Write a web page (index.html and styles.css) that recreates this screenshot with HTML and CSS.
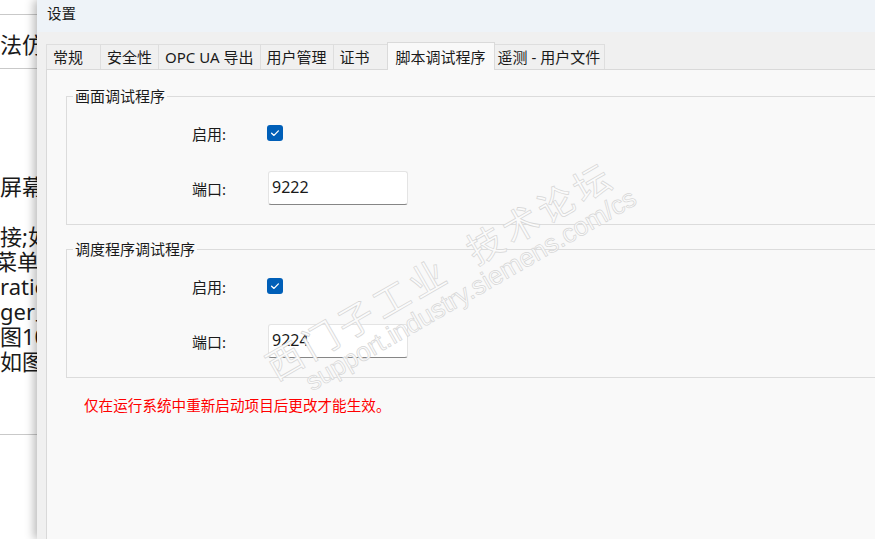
FILE: index.html
```html
<!DOCTYPE html>
<html lang="zh-CN">
<head>
    <meta charset="UTF-8">
    <meta name="viewport" content="width=device-width, initial-scale=1.0">
    <title>设置</title>
    <link rel="stylesheet" href="styles.css">
</head>
<body>
    <div class="screen">
        <div class="doc">
            <div class="doc-rule first"></div>
            <div class="doc-line head">法仿真</div>
            <div class="doc-rule second"></div>
            <div class="doc-text">
                <div class="doc-line">屏幕</div>
                <div class="doc-line">&nbsp;</div>
                <div class="doc-line">接;如</div>
                <div class="doc-line cut">菜单</div>
                <div class="doc-line">ration</div>
                <div class="doc-line">ger显示</div>
                <div class="doc-line">图10</div>
                <div class="doc-line">如图</div>
            </div>
            <div class="doc-rule last"></div>
        </div>

        <div class="dialog">
            <div class="titlebar">设置</div>
            <div class="dialog-body">
                <div class="tabs">
                    <div class="tab">常规</div>
                    <div class="tab">安全性</div>
                    <div class="tab">OPC UA 导出</div>
                    <div class="tab">用户管理</div>
                    <div class="tab">证书</div>
                    <div class="tab active">脚本调试程序</div>
                    <div class="tab last">遥测 - 用户文件</div>
                </div>
                <div class="pane">
                    <fieldset class="group">
                        <legend>画面调试程序</legend>
                        <div class="form-row check-row">
                            <label>启用:</label>
                            <span class="check">
                                <svg width="16" height="16" viewBox="0 0 16 16"><path d="M4.6 8.2 L7 10.4 L11.4 5.9" fill="none" stroke="#fff" stroke-width="1.3" stroke-linecap="round" stroke-linejoin="round"/></svg>
                            </span>
                        </div>
                        <div class="form-row port-row">
                            <label>端口:</label>
                            <input class="port" type="text" value="9222">
                        </div>
                    </fieldset>

                    <fieldset class="group">
                        <legend>调度程序调试程序</legend>
                        <div class="form-row check-row">
                            <label>启用:</label>
                            <span class="check">
                                <svg width="16" height="16" viewBox="0 0 16 16"><path d="M4.6 8.2 L7 10.4 L11.4 5.9" fill="none" stroke="#fff" stroke-width="1.3" stroke-linecap="round" stroke-linejoin="round"/></svg>
                            </span>
                        </div>
                        <div class="form-row port-row">
                            <label>端口:</label>
                            <input class="port" type="text" value="9224">
                        </div>
                    </fieldset>

                    <p class="notice">仅在运行系统中重新启动项目后更改才能生效。</p>
                </div>
            </div>
        </div>

        <!-- forum watermark baked into the screenshot -->
        <div class="watermark">
            <div class="wm-cn">西门子工业&nbsp;&nbsp;技术论坛</div>
            <div class="wm-url">support.industry.siemens.com/cs</div>
        </div>
    </div>
</body>
</html>
```

FILE: styles.css
```css
* {
    box-sizing: border-box;
}

body {
    margin: 0;
    overflow: hidden;
    font-family: "Noto Sans", "Noto Sans CJK SC", sans-serif;
    color: #1a1a1a;
}

.screen {
    position: relative;
    display: flex;
    width: 875px;
    height: 539px;
    overflow: hidden;
    background: #fff;
}

/* document behind the dialog */
.doc {
    flex: none;
    width: 37px;
    overflow: hidden;
    background: #fff;
    font-size: 22px;
    white-space: nowrap;
}

.doc-rule {
    height: 1px;
    width: 60px;
    background: #c9c9c9;
}

.doc-rule.first {
    margin-top: 14px;
}

.doc-rule.second {
    margin-top: 11px;
}

.doc-rule.last {
    margin-top: 60px;
}

.doc-line {
    line-height: 25px;
}

.doc-line.head {
    margin-top: 17px;
}

.doc-text {
    margin-top: 105px;
}

.doc-line.cut {
    margin-left: -5px;
}

/* dialog */
.dialog {
    flex: none;
    width: 900px;
    display: flex;
    flex-direction: column;
    position: relative;
    z-index: 1;
    box-shadow: -3px 0 9px rgba(0, 0, 0, 0.28);
}

.titlebar {
    height: 32px;
    background: #eef3f8;
    padding-left: 10px;
    line-height: 26px;
    font-size: 14.5px;
}

.dialog-body {
    flex: 1;
    display: flex;
    flex-direction: column;
    background: #f0f0f0;
    padding-left: 9px;
}

.tabs {
    display: flex;
    align-items: flex-end;
    height: 37px;
    position: relative;
    z-index: 2;
}

.tab {
    height: 25px;
    line-height: 25px;
    padding: 0 6px;
    min-width: 55px;
    font-size: 15px;
    background: #f0f0f0;
    border: 1px solid #dedede;
    border-bottom: none;
    margin-right: -1px;
}

.tab.last {
    padding: 0 4px 0 3px;
}

.tab.active {
    height: 28px;
    line-height: 28px;
    padding: 0 8px;
    margin-bottom: -1px;
    background: #f9f9f9;
    border-color: #dadada;
    position: relative;
    z-index: 1;
}

.pane {
    flex: 1;
    background: #f9f9f9;
    border-top: 1px solid #d9d9d9;
    border-left: 1px solid #d9d9d9;
    padding-top: 16px;
}

.group {
    margin: 0 20px 0 19px;
    padding: 0 0 19px 0;
    border: 1px solid #dcdcdc;
    min-width: 0;
}

.group + .group {
    margin-top: 14px;
}

.group legend {
    margin-left: 6px;
    padding: 0 2px;
    font-size: 15px;
    line-height: 20px;
}

.form-row {
    display: grid;
    grid-template-columns: 161px 140px;
    column-gap: 40px;
    align-items: center;
    font-size: 15px;
}

.form-row label {
    text-align: right;
    padding-right: 2px;
}

.check-row {
    height: 30px;
    margin-top: 12px;
}

.port-row {
    margin-top: 23px;
}

.check {
    width: 16px;
    height: 16px;
    margin-left: -1px;
    border-radius: 3px;
    background: #005fb8;
    display: flex;
}

.port {
    width: 140px;
    height: 34px;
    padding: 0 3px 2px;
    border: 1px solid #e4e4e4;
    border-bottom: 1px solid #868686;
    border-radius: 3px;
    background: #fff;
    font-family: "Noto Sans", sans-serif;
    font-size: 16px;
    color: #1a1a1a;
    outline: none;
}

.notice {
    margin: 17px 0 0 0;
    padding-left: 37px;
    line-height: 20px;
    font-size: 14.6px;
    color: #ff0000;
}

/* watermark */
.watermark {
    position: absolute;
    left: 258px;
    top: 350px;
    z-index: 5;
    transform: rotate(-30deg);
    transform-origin: left top;
    pointer-events: none;
    white-space: nowrap;
    color: #fbfbfb;
    -webkit-text-stroke: 0.7px #d6d6d6;
}

.wm-cn {
    font-family: "Noto Sans CJK SC", sans-serif;
    font-size: 36px;
    line-height: 40px;
    letter-spacing: 5px;
}

.wm-url {
    font-family: "Liberation Sans", sans-serif;
    font-size: 26px;
    line-height: 28px;
    margin-left: 26px;
}
```
